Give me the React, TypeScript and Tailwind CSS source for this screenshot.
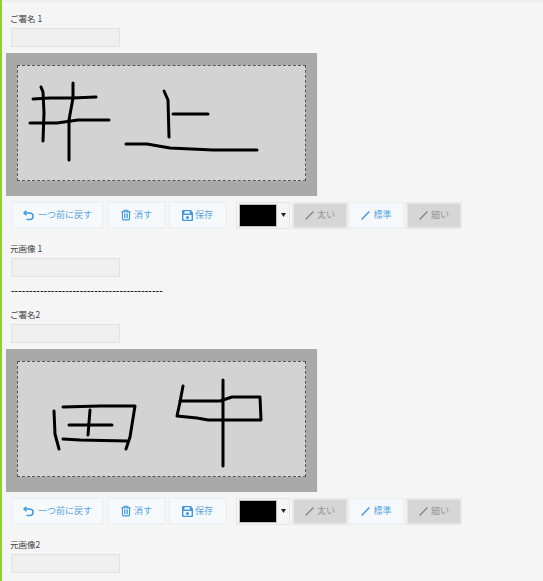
import React from "react";

const font = { fontFamily: '"Noto Sans CJK JP", "Noto Sans", sans-serif' };

function UndoIcon() {
  return (
    <svg width="11" height="11" viewBox="0 0 11 11" fill="none" stroke="#3b97dc" strokeWidth="1.5">
      <path d="M3.4 0.8 L1 3 L3.4 5.2" />
      <path d="M1.2 3 H6.5 C8.6 3 10 4.4 10 6.2 C10 8 8.6 9.5 6.5 9.5 H3.5" />
    </svg>
  );
}

function TrashIcon() {
  return (
    <svg width="10" height="12" viewBox="0 0 11 12" fill="none" stroke="#3b97dc" strokeWidth="1.2">
      <path d="M0.5 2.4 H10.5" />
      <path d="M3.5 2.2 V0.8 H7.5 V2.2" />
      <path d="M1.6 2.4 V10.4 Q1.6 11.4 2.6 11.4 H8.4 Q9.4 11.4 9.4 10.4 V2.4" />
      <path d="M3.9 4.2 V9.6 M5.5 4.2 V9.6 M7.1 4.2 V9.6" strokeWidth="0.9" />
    </svg>
  );
}

function SaveIcon() {
  return (
    <svg width="11" height="11" viewBox="0 0 11 11">
      <path d="M1 0 H8.6 L11 2.4 V10 Q11 11 10 11 H1 Q0 11 0 10 V1 Q0 0 1 0 Z" fill="#3b97dc" />
      <rect x="2.4" y="1.2" width="5.4" height="2.4" fill="#f5f9fc" />
      <rect x="1.4" y="5" width="8.2" height="4.8" fill="#f5f9fc" />
      <circle cx="5.5" cy="7.4" r="1.5" fill="#3b97dc" />
    </svg>
  );
}

function PenIcon({ color }: { color: string }) {
  return (
    <svg width="9" height="9" viewBox="0 0 9 9" fill="none" stroke={color} strokeWidth="1.4">
      <path d="M0.6 8.4 L8.4 0.6" />
    </svg>
  );
}

function ActionButton({ w, icon, label, gap }: { w: string; icon: React.ReactNode; label: string; gap: string }) {
  return (
    <button className={`${w} ${gap} h-[28px] flex items-center justify-center bg-[#f6f9fc] border-2 border-[#eff1f3] text-[9px] text-[#5aa6de]`}>
      {icon}
      <span>{label}</span>
    </button>
  );
}

function WeightButton({ w, label, active }: { w: string; label: string; active?: boolean }) {
  return (
    <button
      className={`${w} h-[27px] flex items-center justify-center gap-[3px] text-[9px] border-2 ${
        active ? "bg-[#f6f9fc] border-[#eff1f3] text-[#5aa6de]" : "bg-[#d6d6d6] border-[#e8e8e8] text-[#959595]"
      }`}
    >
      <PenIcon color={active ? "#3b97dc" : "#858585"} />
      <span>{label}</span>
    </button>
  );
}

function Toolbar() {
  return (
    <div className="ml-[11px] mt-[5px] flex items-center h-[28px]">
      <ActionButton w="w-[93px]" gap="gap-[4px]" icon={<UndoIcon />} label="一つ前に戻す" />
      <div className="w-[3px]" />
      <ActionButton w="w-[59px]" gap="gap-[3px]" icon={<TrashIcon />} label="消す" />
      <div className="w-[2px]" />
      <ActionButton w="w-[59px]" gap="gap-[2px]" icon={<SaveIcon />} label="保存" />
      <div className="w-[9px]" />
      <div className="w-[54px] h-[27px] flex items-center border border-[#e6e6e6] pl-[2px]">
        <div className="w-[38px] h-[23px] bg-black border border-[#bdbdbd]" />
        <svg className="ml-[4px]" width="5" height="4" viewBox="0 0 5 4">
          <path d="M0 0 H5 L2.5 4 Z" fill="#222" />
        </svg>
      </div>
      <div className="w-[2px]" />
      <WeightButton w="w-[56px]" label="太い" />
      <WeightButton w="w-[57px]" label="標準" active />
      <div className="w-px" />
      <WeightButton w="w-[56px]" label="細い" />
    </div>
  );
}

function Field({ label, top }: { label: string; top: string }) {
  return (
    <div className={top}>
      <div className="ml-[10px] h-[14px] leading-[14px] text-[8.5px] text-[#444]">{label}</div>
      <div className="ml-[11px] mt-[3px] w-[109px] h-[19px] bg-[#efefef] border border-[#e2e2e2]" />
    </div>
  );
}

function Signature({ paths }: { paths: string[] }) {
  return (
    <div className="ml-[6px] mt-[6px] w-[312px] h-[143px] bg-[#a9a9a9] border-r border-[#eeeeee] flex pt-[12px] pl-[11px]">
      <div className="relative w-[289px] h-[116px] bg-[#d3d3d3] border border-dashed border-[#555]">
        <svg className="absolute left-[-1px] top-[-1px]" width="289" height="116" viewBox="0 0 289 116" fill="none" stroke="#000" strokeWidth="3" strokeLinecap="round" strokeLinejoin="round">
          {paths.map((d) => (
            <path key={d} d={d} />
          ))}
        </svg>
      </div>
    </div>
  );
}

// Stroke coordinates are relative to the dashed drawing area.
const first = [
  "M24 22 L26 27 L27 48 L26 76",
  "M16 34 L33 33 L55 33 L79 32",
  "M56 18 L56 33 L52 55 L52 75 L52 95",
  "M13 58 L40 58 L61 55 L92 55",
  "M147 26 L151 35 L152 72",
  "M156 49 L191 49",
  "M109 79 L130 79 L153 83 L196 85 L240 85",
];

const second = [
  "M37 50 L38 73 L42 88",
  "M46 46 L83 45 L118 45 L113 76 L109 88",
  "M46 78 L63 79 L110 80",
  "M52 64 L95 64",
  "M73 49 L71 74",
  "M166 25 L163 41 L160 55 L180 57 L191 59 L243 59",
  "M163 40 L203 40 L215 36 L243 36 L244 59",
  "M206 19 L206 105",
];

export default function App() {
  return (
    <div style={font} className="w-[543px] h-[581px] overflow-hidden bg-[#f5f5f5] border-l-2 border-[#8fd12e]">
      <div className="-ml-[2px] border-t-2 border-[#eeeeee]">
        <Field label="ご署名 1" top="pt-[9px]" />
        <Signature paths={first} />
        <Toolbar />
        <Field label="元画像 1" top="pt-[12px]" />
        <div className="ml-[11px] mt-[7px] h-[12px] leading-[12px] text-[9.5px] font-bold text-[#222] tracking-[0.1px]">
          ------------------------------------------
        </div>
        <Field label="ご署名2" top="pt-[11px]" />
        <Signature paths={second} />
        <Toolbar />
        <Field label="元画像2" top="pt-[12px]" />
      </div>
    </div>
  );
}
